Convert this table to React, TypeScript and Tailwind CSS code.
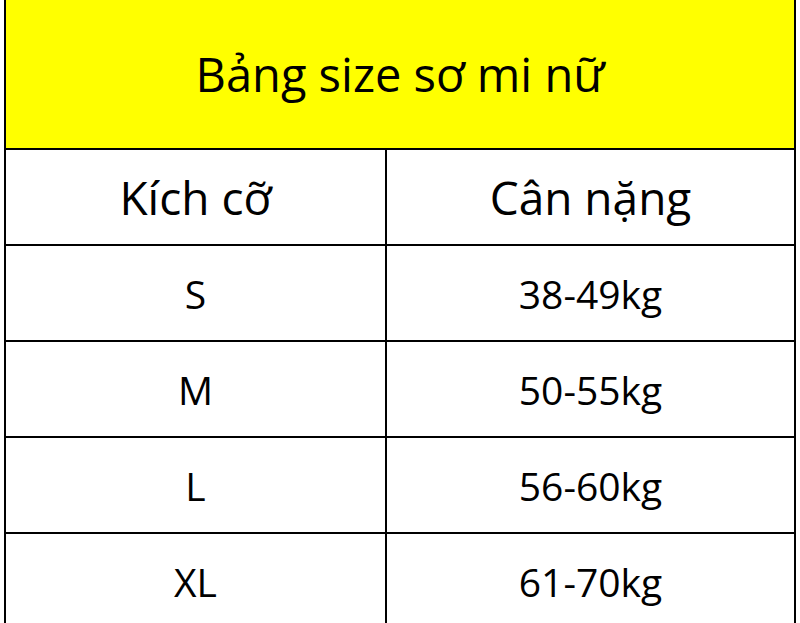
import React from 'react';

const rows = [
    { size: 'S', weight: '38-49kg' },
    { size: 'M', weight: '50-55kg' },
    { size: 'L', weight: '56-60kg' },
    { size: 'XL', weight: '61-70kg' },
];

const App = () => {
    return (
        <div className="w-[800px] h-[623px] overflow-hidden bg-white font-['Open_Sans',sans-serif] text-black">
            <div className="ml-[4px] w-[792px] border-x-2 border-black">
                {/* Title */}
                <div className="h-[150px] bg-[#ffff00] border-b-2 border-black flex items-center justify-center">
                    <h1 className="text-[47px] leading-none">Bảng size sơ mi nữ</h1>
                </div>

                {/* Column headers */}
                <div className="grid grid-cols-[381px_1fr] h-[96px] border-b-2 border-black">
                    <div className="border-r-2 border-black flex items-center justify-center text-[46px] leading-none">
                        Kích cỡ
                    </div>
                    <div className="flex items-center justify-center text-[46px] leading-none">
                        Cân nặng
                    </div>
                </div>

                {/* Rows */}
                {rows.map((row) => (
                    <div key={row.size} className="grid grid-cols-[381px_1fr] h-[96px] border-b-2 border-black">
                        <div className="border-r-2 border-black flex items-center justify-center text-[39px] leading-none">
                            {row.size}
                        </div>
                        <div className="flex items-center justify-center text-[39px] leading-none">
                            {row.weight}
                        </div>
                    </div>
                ))}
            </div>
        </div>
    );
};

export default App;
